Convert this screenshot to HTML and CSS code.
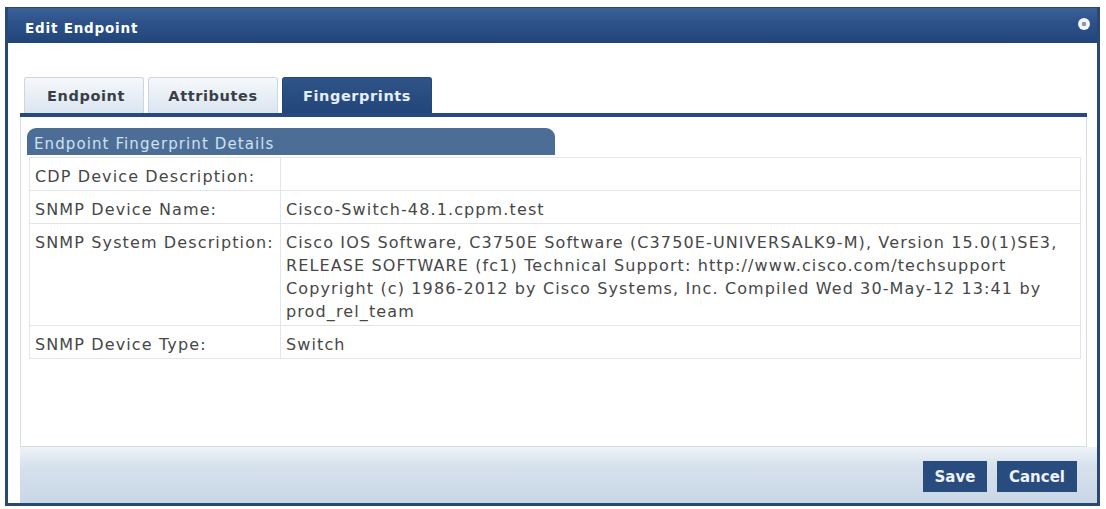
FILE: index.html
```html
<!DOCTYPE html>
<html lang="en">
<head>
    <meta charset="UTF-8">
    <title>Edit Endpoint</title>
    <link rel="stylesheet" href="styles.css">
</head>
<body>
    <div class="dialog">
        <div class="title-bar">
            <span class="title">Edit Endpoint</span>
            <span class="close"></span>
        </div>

        <div class="content">
            <!-- Tabs -->
            <div class="tabs">
                <div class="tab">Endpoint</div>
                <div class="tab">Attributes</div>
                <div class="tab active">Fingerprints</div>
            </div>

            <div class="panel">
                <div class="section-head">Endpoint Fingerprint Details</div>
                <table class="details">
                    <tr>
                        <td class="label">CDP Device Description:</td>
                        <td></td>
                    </tr>
                    <tr>
                        <td class="label">SNMP Device Name:</td>
                        <td>Cisco-Switch-48.1.cppm.test</td>
                    </tr>
                    <tr>
                        <td class="label">SNMP System Description:</td>
                        <td>Cisco IOS Software, C3750E Software (C3750E-UNIVERSALK9-M), Version 15.0(1)SE3, RELEASE SOFTWARE (fc1) Technical Support: http://www.cisco.com/techsupport Copyright (c) 1986-2012 by Cisco Systems, Inc. Compiled Wed 30-May-12 13:41 by prod_rel_team</td>
                    </tr>
                    <tr>
                        <td class="label">SNMP Device Type:</td>
                        <td>Switch</td>
                    </tr>
                </table>
            </div>

            <div class="footer">
                <button class="btn">Save</button>
                <button class="btn">Cancel</button>
            </div>
        </div>
    </div>
</body>
</html>
```

FILE: styles.css
```css
* {
    margin: 0;
    padding: 0;
    box-sizing: border-box;
}

body {
    background-color: #fff;
    font-family: "DejaVu Sans", Verdana, sans-serif;
    color: #444;
}

.dialog {
    margin: 7px 6px 0 5px;
    width: 1095px;
    height: 499px;
    border: 3px solid #2a4874;
    border-top-width: 1px;
    display: flex;
    flex-direction: column;
    background-color: #fff;
}

.title-bar {
    height: 35px;
    display: flex;
    align-items: center;
    justify-content: space-between;
    padding: 0 7px 0 17px;
    background: linear-gradient(#3c6197, #2c5189 45%, #214579);
}

.title {
    color: #fff;
    font-weight: bold;
    font-size: 13.5px;
    letter-spacing: 0.8px;
    margin-top: 5px;
}

.close {
    width: 12px;
    height: 12px;
    border-radius: 50%;
    background: radial-gradient(#8a98aa 0 2px, #f2f4f7 2.5px);
    margin-top: -3px;
}

.content {
    flex: 1;
    display: flex;
    flex-direction: column;
    padding: 34px 0 0 12px;
}

.tabs {
    display: flex;
    gap: 4px;
    padding-left: 4px;
    margin-right: 10px;
    border-bottom: 4px solid #27497c;
}

.tab {
    height: 36px;
    display: flex;
    align-items: center;
    justify-content: center;
    font-weight: bold;
    font-size: 14.5px;
    letter-spacing: 0.6px;
    color: #3a3f47;
    background: linear-gradient(#f6f8fb, #dbe5f0);
    border: 1px solid #cdd6e0;
    border-bottom: none;
    border-radius: 3px 3px 0 0;
}

.tab:first-child {
    width: 120px;
    padding-left: 4px;
}

.tab:nth-child(2) {
    width: 130px;
}

.tab.active {
    width: 150px;
    color: #e6eefa;
    background: linear-gradient(#2f5487, #23467a);
    border-color: #23467a;
}

.panel {
    flex: 1;
    margin-right: 10px;
    border: 1px solid #d6dce3;
    border-top: none;
    padding: 11px 6px 0 6px;
}

.section-head {
    width: 528px;
    height: 27px;
    padding: 7px 0 0 7px;
    font-size: 15px;
    letter-spacing: 1.1px;
    color: #cfe0f2;
    background-color: #4c6e96;
    border-radius: 9px 9px 0 0;
}

.details {
    margin: 2px 0 0 2px;
    width: 1052px;
    border-collapse: collapse;
    font-size: 16px;
    letter-spacing: 1.12px;
    line-height: 23px;
    color: #474747;
}

.details td {
    border: 1px solid #e2e6ea;
    padding: 7px 6px 2px 5px;
    vertical-align: top;
}

.details td.label {
    width: 251px;
    white-space: nowrap;
}

.footer {
    height: 56px;
    display: flex;
    justify-content: flex-end;
    align-items: flex-start;
    gap: 10px;
    padding: 14px 20px 0 0;
    background: linear-gradient(#eef3f8, #d6e1ec 35%, #c9d7e6);
}

.btn {
    height: 31px;
    border: none;
    background-color: #284c7e;
    color: #eef3fa;
    font-family: "DejaVu Sans", Verdana, sans-serif;
    font-weight: bold;
    font-size: 15px;
    cursor: pointer;
}

.btn:first-child {
    width: 64px;
}

.btn:last-child {
    width: 80px;
}
```
